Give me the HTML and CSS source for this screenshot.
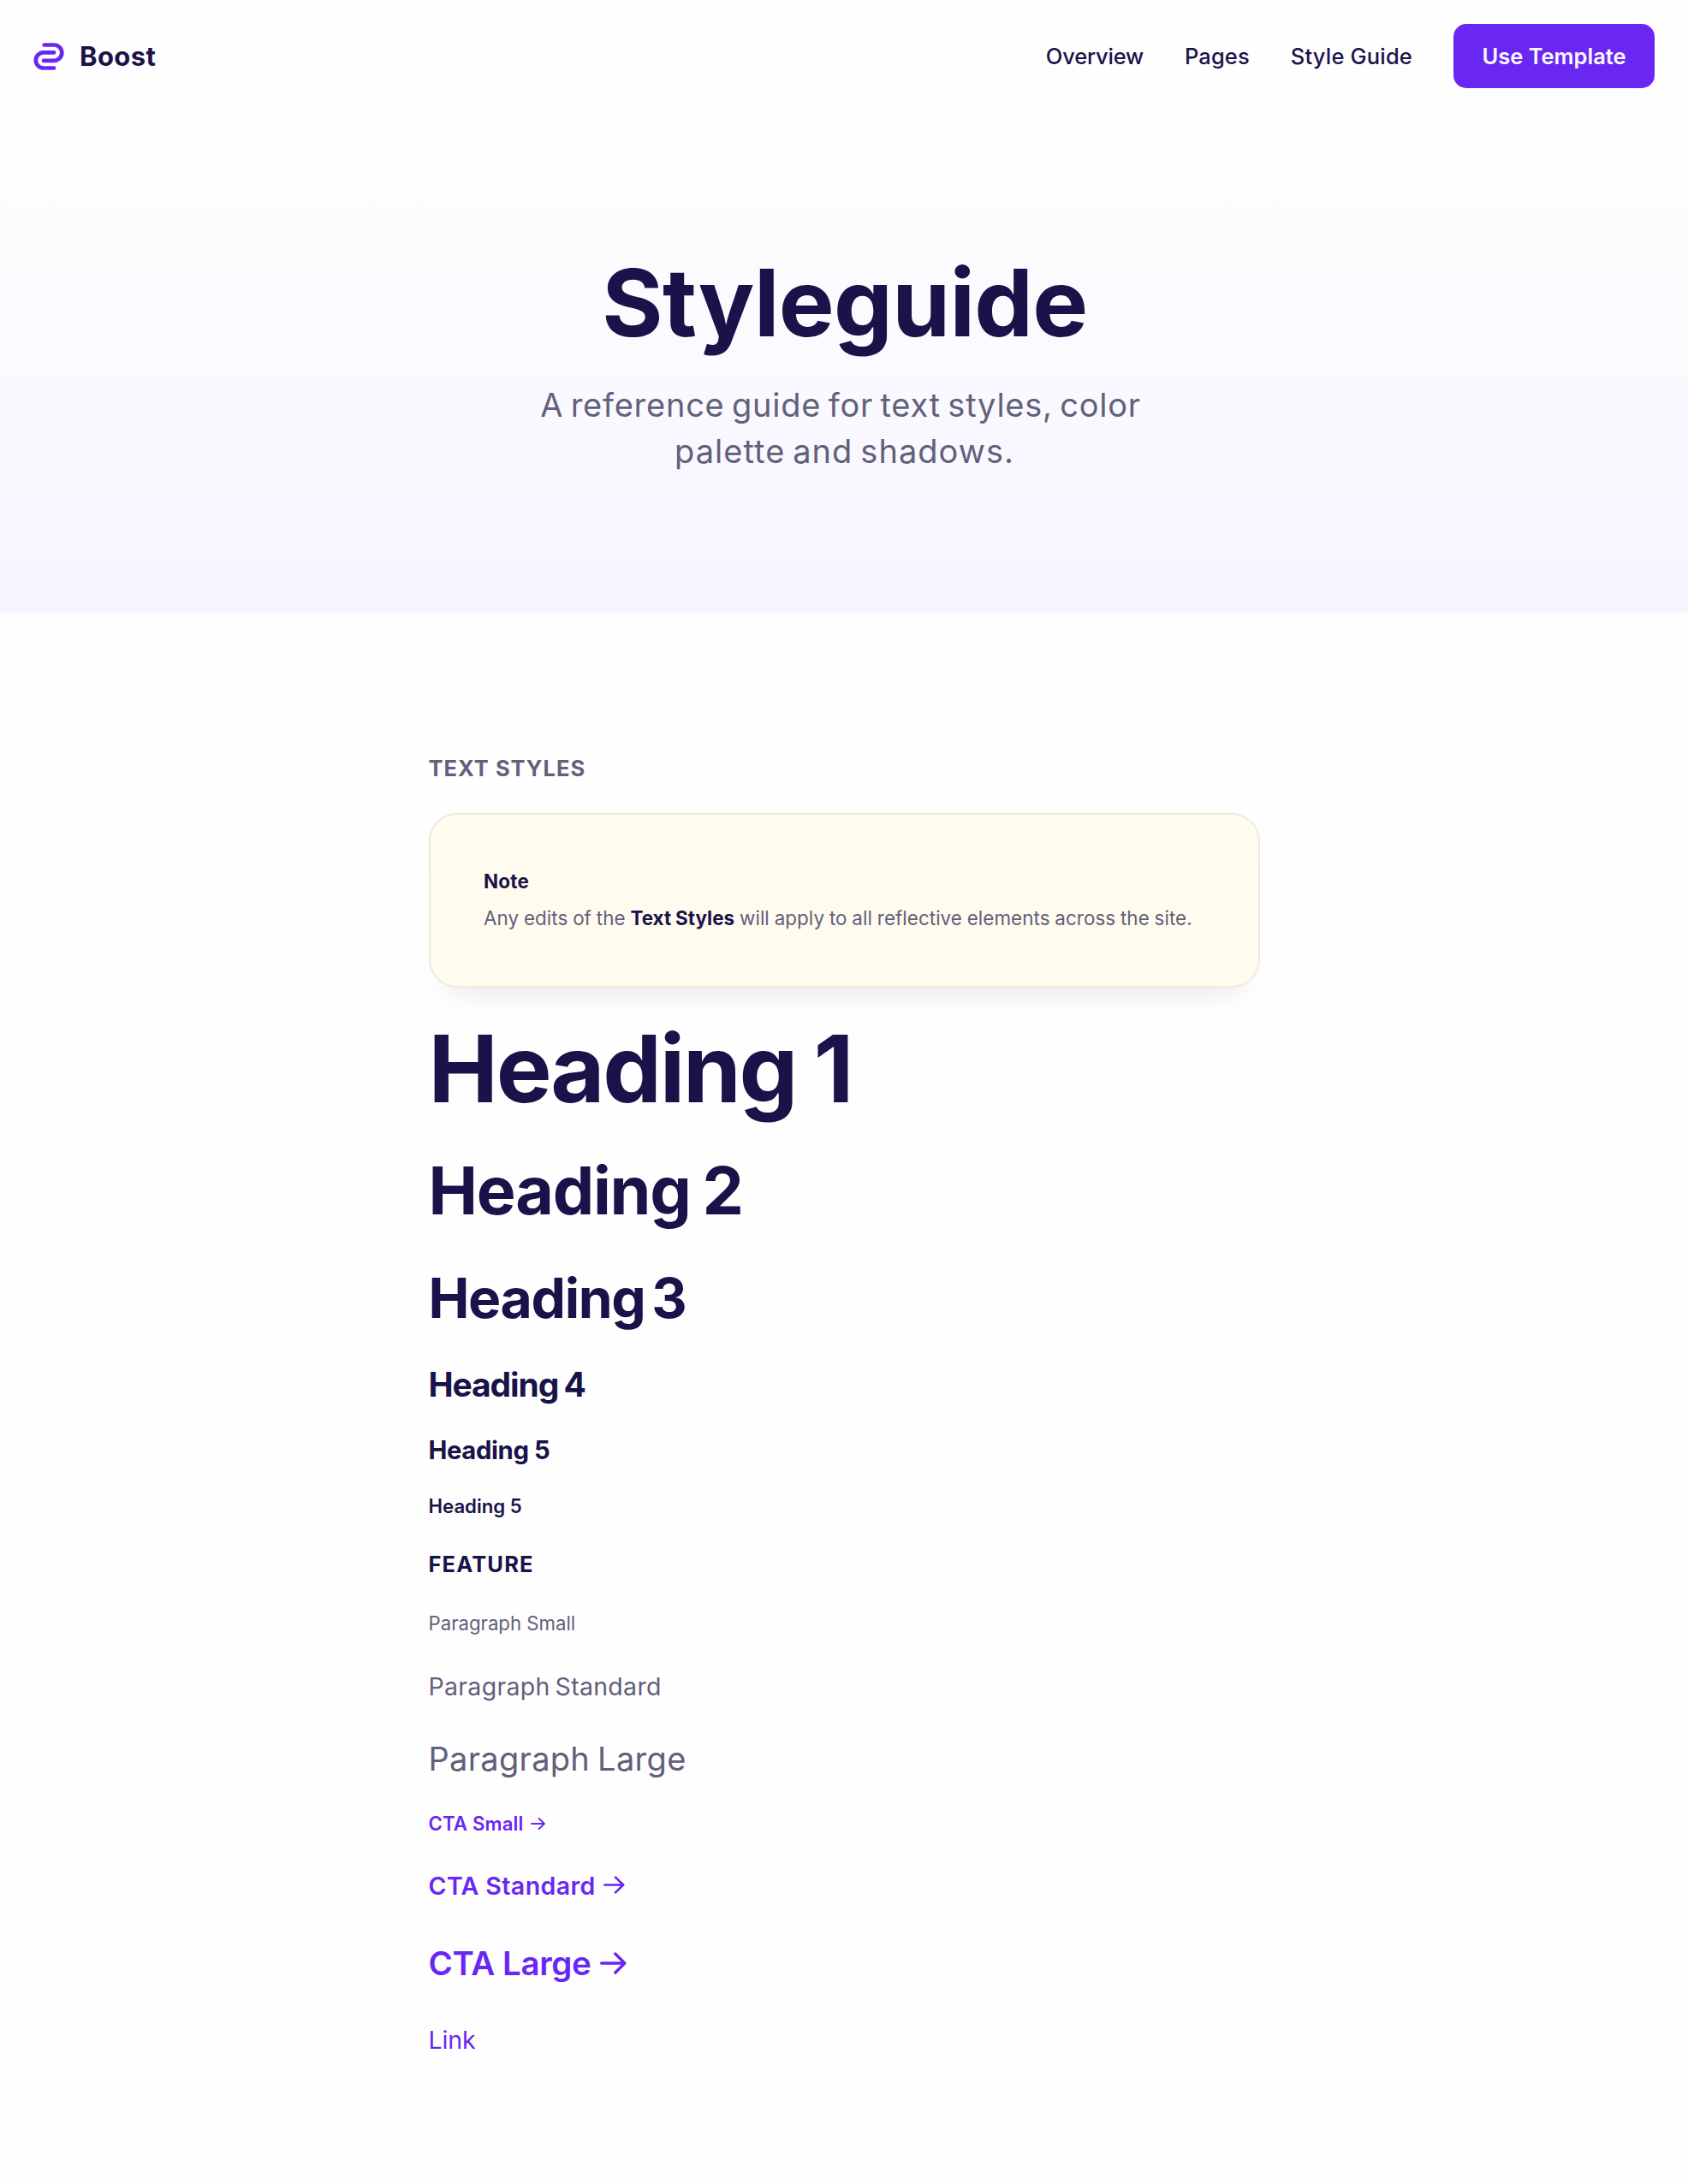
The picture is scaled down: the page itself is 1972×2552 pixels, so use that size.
FILE: index.html
```html
<!DOCTYPE html>
<html lang="en">
<head>
<meta charset="utf-8">
<title>Boost – Styleguide</title>
<link rel="stylesheet" href="styles.css">
</head>
<body>
<header class="hero">
  <nav class="nav">
    <a class="brand" href="#">
      <svg class="brand-mark" viewBox="0 0 36 32" fill="none" stroke="currentColor" stroke-width="4.7" stroke-linecap="round">
        <path d="M12.6 2.5H24.1a9.2 9.2 0 0 1 0 18.4H12"/>
        <path d="M24 11.3H11.9a9.1 9.1 0 0 0 0 18.2H24"/>
      </svg>
      <span class="brand-name">Boost</span>
    </a>
    <div class="nav-links">
      <a class="nav-link nav-overview" href="#">Overview</a>
      <a class="nav-link nav-pages" href="#">Pages</a>
      <a class="nav-link nav-guide" href="#">Style Guide</a>
      <a class="nav-button" href="#">Use Template</a>
    </div>
  </nav>
  <div class="hero-copy">
    <h1 class="hero-title">Styleguide</h1>
    <p class="hero-text"><span class="line line-a">A reference guide for text styles, color</span> <span class="line line-b">palette and shadows.</span></p>
  </div>
</header>
<main class="content">
  <h2 class="eyebrow">TEXT STYLES</h2>
  <aside class="note">
    <div class="note-title">Note</div>
    <p class="note-text">Any edits of the <strong>Text Styles</strong> will apply to all reflective elements across the site.</p>
  </aside>
  <h1 class="h1">Heading 1</h1>
  <h2 class="h2">Heading 2</h2>
  <h3 class="h3">Heading 3</h3>
  <h4 class="h4">Heading 4</h4>
  <h5 class="h5">Heading 5</h5>
  <h6 class="h6">Heading 5</h6>
  <div class="feature">FEATURE</div>
  <p class="p-small">Paragraph Small</p>
  <p class="p-standard">Paragraph Standard</p>
  <p class="p-large">Paragraph Large</p>
  <a class="cta cta-small" href="#">CTA Small
    <svg class="arrow" viewBox="0 0 17 14"><path d="M1 7H15.6M9.8 1l6 6-6 6"/></svg>
  </a>
  <a class="cta cta-standard" href="#">CTA Standard
    <svg class="arrow" viewBox="0 0 25 21"><path d="M1.3 10.5H23M14 1.6l9.2 8.9L14 19.4"/></svg>
  </a>
  <a class="cta cta-large" href="#">CTA Large
    <svg class="arrow" viewBox="0 0 31 26"><path d="M1.7 13H28.6M17.8 2l11 11-11 11"/></svg>
  </a>
  <a class="link" href="#">Link</a>
</main>
</body>
</html>
```
FILE: styles.css
```css
:root {
  --ink: #1a134a;
  --muted: #62607a;
  --brand: #6927f1;
}

* {
  box-sizing: border-box;
}

body {
  margin: 0;
  min-height: 2552px;
  background: #fefefe;
  color: var(--ink);
  font-family: Inter, "Liberation Sans", sans-serif;
}

h1, h2, h3, h4, h5, h6, p {
  margin: 0;
  font-weight: 700;
}

a {
  color: inherit;
  text-decoration: none;
}

/* Hero */
.hero {
  height: 716px;
  background: linear-gradient(#fefefe 0, #fefefe 110px, #f7f5ff 100%);
}

.nav {
  display: flex;
  align-items: center;
  justify-content: space-between;
  height: 131px;
  padding: 0 39px;
}

.brand {
  display: flex;
  align-items: center;
  gap: 18px;
}

.brand-mark {
  width: 36px;
  height: 32px;
  color: var(--brand);
}

.brand-name {
  font-size: 31px;
  font-weight: 700;
  line-height: 40px;
  letter-spacing: 0.4px;
}

.nav-links {
  display: flex;
  align-items: center;
  gap: 48px;
  font-size: 25.5px;
  font-weight: 500;
}

.nav-overview { letter-spacing: -0.2px; }
.nav-pages { letter-spacing: 0.12px; }
.nav-guide { letter-spacing: 0.18px; }

.nav-button {
  width: 235px;
  height: 75px;
  border-radius: 15px;
  background: var(--brand);
  color: #fbf8ff;
  font-weight: 600;
  line-height: 75px;
  text-align: center;
}

.hero-copy {
  padding-top: 162px;
  text-align: center;
}

.hero-title {
  padding-left: 2px;
  font-size: 109px;
  line-height: 120px;
  letter-spacing: -0.67px;
}

.hero-text {
  margin-top: 33px;
  color: var(--muted);
  font-size: 38px;
  font-weight: 400;
  line-height: 54px;
}

.line { display: block; }
.line-a { padding-right: 8px; letter-spacing: 0.75px; word-spacing: -2.9px; }
.line-b { padding-left: 1px; letter-spacing: 1.05px; word-spacing: -2.9px; }

/* Text styles */
.content {
  display: flex;
  flex-direction: column;
  align-items: flex-start;
  width: 971px;
  margin: 0 auto;
  padding-top: 166px;
}

.eyebrow {
  color: var(--muted);
  font-size: 25.5px;
  line-height: 32px;
  letter-spacing: 1px;
}

.note {
  width: 971px;
  height: 204px;
  margin-top: 36px;
  padding: 60px 62.5px 0;
  border: 2px solid #eeebdb;
  border-radius: 33px;
  background: #fffbef;
  box-shadow: 0 28px 32px -22px rgba(26, 19, 74, 0.09);
}

.note-title {
  font-size: 22.4px;
  font-weight: 700;
  line-height: 36px;
  letter-spacing: 0.24px;
}

.note-text {
  margin-top: 7px;
  color: var(--muted);
  font-size: 22.4px;
  font-weight: 400;
  line-height: 36px;
  white-space: nowrap;
  letter-spacing: 0.05px;
  word-spacing: -0.5px;
}

.note-text strong {
  color: var(--ink);
}

.h1 { margin-top: 34px; font-size: 109px; line-height: 120px; letter-spacing: -2.3px; word-spacing: -3.2px; }
.h2 { margin-top: 37px; font-size: 77px; line-height: 92px; letter-spacing: -1.24px; word-spacing: -3.2px; }
.h3 { margin-top: 41px; font-size: 64.2px; line-height: 78px; letter-spacing: -1.35px; word-spacing: -6px; }
.h4 { margin-top: 37px; font-size: 39px; line-height: 50px; letter-spacing: -1.1px; word-spacing: -2px; }
.h5 { margin-top: 32px; font-size: 29.3px; line-height: 40px; letter-spacing: -0.4px; }
.h6 { margin-top: 29px; font-size: 22.2px; font-weight: 600; line-height: 32px; }

.feature {
  margin-top: 34px;
  font-size: 25.5px;
  font-weight: 700;
  line-height: 36px;
  letter-spacing: 1.15px;
}

.p-small, .p-standard, .p-large {
  color: var(--muted);
  font-weight: 400;
}

.p-small { margin-top: 33px; font-size: 22.2px; line-height: 36px; }
.p-standard { margin-top: 33px; font-size: 28.5px; line-height: 46px; letter-spacing: 0.3px; word-spacing: -2.4px; }
.p-large { margin-top: 34px; font-size: 38px; line-height: 54px; letter-spacing: 0.3px; word-spacing: -2px; }

.cta {
  display: flex;
  align-items: center;
  color: var(--brand);
  font-weight: 600;
}

.arrow {
  fill: none;
  stroke: currentColor;
  stroke-linecap: round;
  stroke-linejoin: round;
}

.cta-small { gap: 8px; margin-top: 31px; font-size: 22.2px; line-height: 36px; letter-spacing: 0.16px; }
.cta-small .arrow { width: 17px; height: 14px; margin-bottom: 1px; stroke-width: 1.9; }

.cta-standard { gap: 9px; margin-top: 35px; font-size: 28.5px; line-height: 40px; letter-spacing: 0.4px; }
.cta-standard .arrow { width: 25px; height: 21px; margin-bottom: 3px; stroke-width: 2.6; }

.cta-large { gap: 11px; margin-top: 43px; font-size: 38.5px; line-height: 54px; letter-spacing: -0.38px; }
.cta-large .arrow { width: 31px; height: 26px; margin-bottom: 1px; stroke-width: 3.4; }

.link {
  margin-top: 40px;
  color: var(--brand);
  font-size: 28.5px;
  line-height: 46px;
  letter-spacing: -0.1px;
}
```
